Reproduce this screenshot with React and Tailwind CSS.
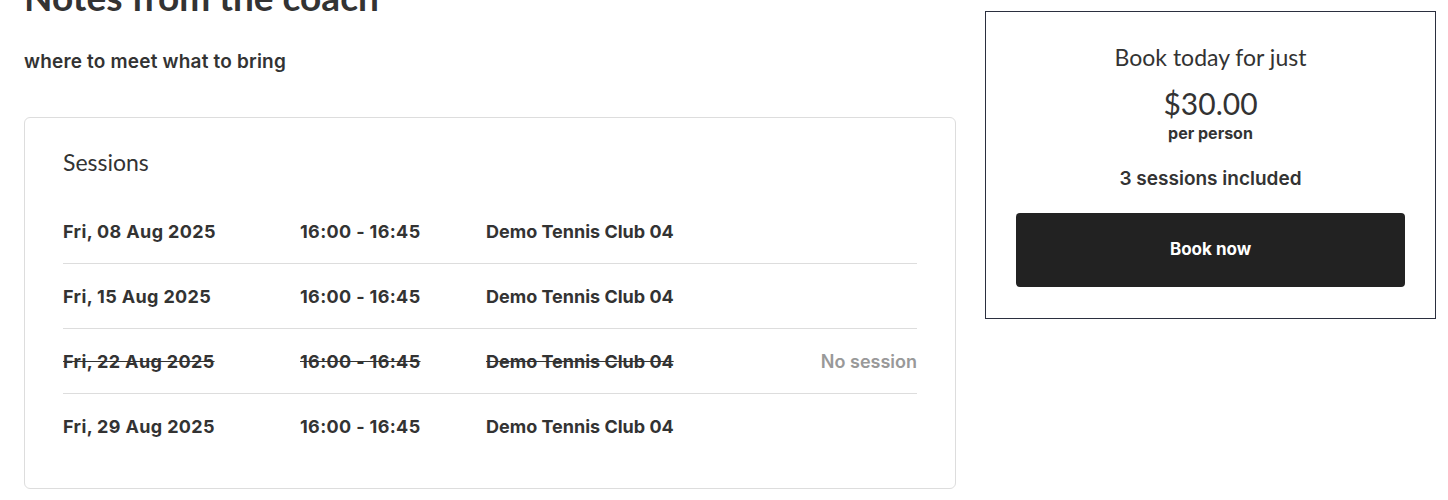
import React from 'react';

const sessions = [
  { date: 'Fri, 08 Aug 2025', time: '16:00 - 16:45', place: 'Demo Tennis Club 04', cancelled: false },
  { date: 'Fri, 15 Aug 2025', time: '16:00 - 16:45', place: 'Demo Tennis Club 04', cancelled: false },
  { date: 'Fri, 22 Aug 2025', time: '16:00 - 16:45', place: 'Demo Tennis Club 04', cancelled: true },
  { date: 'Fri, 29 Aug 2025', time: '16:00 - 16:45', place: 'Demo Tennis Club 04', cancelled: false },
];

const body = { fontFamily: 'Inter, "Noto Sans", sans-serif' };
const head = { fontFamily: 'Lato, "Noto Sans", sans-serif' };

const SessionRow = ({ session, last }) => {
  const strike = session.cancelled ? 'line-through decoration-[#333]' : '';
  return (
    <div className={`flex items-center h-[65px] ${last ? '' : 'border-b border-[#dddddd]'}`}>
      <div className={`w-[237px] tracking-[0.02em] ${strike}`}>{session.date}</div>
      <div className={`w-[186px] tracking-[0.02em] ${strike}`}>{session.time}</div>
      <div className={`flex-1 ${strike}`}>{session.place}</div>
      {session.cancelled && <div className="text-[#999999] font-semibold">No session</div>}
    </div>
  );
};

export default function App() {
  return (
    <div className="bg-white w-[1448px] h-[500px] overflow-hidden text-[#333333]">
      <div className="flex pl-6 pr-3 gap-[29px]">
        <div className="w-[932px]">
          <h1 style={head} className="text-[37px] font-bold leading-none -mt-[22px]">Notes from the coach</h1>
          <p style={body} className="text-[19px] font-semibold tracking-[0.01em] mt-[35px] leading-6">where to meet what to bring</p>
          <div className="mt-[43px] border border-[#dddddd] rounded-md h-[372px] px-[38px] pt-[29px]">
            <h2 style={head} className="text-[23px] leading-[30px] mb-[22px]">Sessions</h2>
            <div style={body} className="text-[18px] font-bold">
              {sessions.map((s, i) => (
                <SessionRow key={i} session={s} last={i === sessions.length - 1} />
              ))}
            </div>
          </div>
        </div>
        <div className="w-[451px] mt-[11px] h-[308px] border border-[#2b2f3f] flex flex-col items-center px-[30px] pt-[29px]">
          <div style={head} className="text-[23px] leading-8">Book today for just</div>
          <div style={head} className="text-[30px] leading-9 mt-[12px]">$30.00</div>
          <div style={body} className="text-[16px] font-bold leading-5 mt-[2px]">per person</div>
          <div style={body} className="text-[19px] font-semibold leading-6 mt-[24px]">3 sessions included</div>
          <button style={body} className="mt-[22px] w-full h-[74px] bg-[#222222] rounded text-white text-[17px] font-bold">
            Book now
          </button>
        </div>
      </div>
    </div>
  );
}
